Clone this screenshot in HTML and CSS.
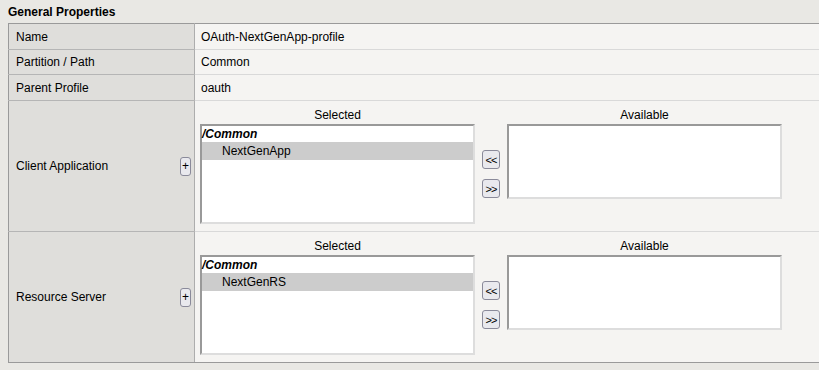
FILE: index.html
```html
<!DOCTYPE html>
<html lang="en">
<head>
    <meta charset="UTF-8">
    <title>OAuth Profile - General Properties</title>
    <link rel="stylesheet" href="styles.css">
</head>
<body>
<div class="section">
    <div class="section-title">General Properties</div>
    <table class="props">
        <tr>
            <td class="label">Name</td>
            <td class="value">OAuth-NextGenApp-profile</td>
        </tr>
        <tr class="short">
            <td class="label">Partition / Path</td>
            <td class="value">Common</td>
        </tr>
        <tr>
            <td class="label">Parent Profile</td>
            <td class="value">oauth</td>
        </tr>
        <tr class="tall">
            <td class="label">
                <div class="label-row">
                    <span>Client Application</span>
                    <button class="mini-btn plus">+</button>
                </div>
            </td>
            <td class="value list-cell">
                <div class="chooser">
                    <div class="col-title">Selected</div>
                    <div></div>
                    <div class="col-title">Available</div>
                    <div class="listbox big">
                        <div class="group">/Common</div>
                        <div class="option selected">NextGenApp</div>
                    </div>
                    <div class="move-btns">
                        <button class="mini-btn">&lt;&lt;</button>
                        <button class="mini-btn">&gt;&gt;</button>
                    </div>
                    <div class="listbox small"></div>
                </div>
            </td>
        </tr>
        <tr class="tall last">
            <td class="label">
                <div class="label-row">
                    <span>Resource Server</span>
                    <button class="mini-btn plus">+</button>
                </div>
            </td>
            <td class="value list-cell">
                <div class="chooser">
                    <div class="col-title">Selected</div>
                    <div></div>
                    <div class="col-title">Available</div>
                    <div class="listbox big">
                        <div class="group">/Common</div>
                        <div class="option selected">NextGenRS</div>
                    </div>
                    <div class="move-btns">
                        <button class="mini-btn">&lt;&lt;</button>
                        <button class="mini-btn">&gt;&gt;</button>
                    </div>
                    <div class="listbox small"></div>
                </div>
            </td>
        </tr>
    </table>
</div>
</body>
</html>
```

FILE: styles.css
```css
body {
    margin: 0;
    background-color: #e9e8e4;
    font-family: "Liberation Sans", Arial, sans-serif;
    font-size: 12px;
    color: #000;
    overflow: hidden;
}

.section {
    padding-left: 8px;
}

.section-title {
    font-weight: bold;
    height: 23px;
    line-height: 16px;
    padding-top: 4px;
    box-sizing: border-box;
}

/* Properties table */
.props {
    border-collapse: collapse;
    width: calc(100% + 20px);
    border-top: 1px solid #9a9a9a;
    border-left: 1px solid #9a9a9a;
}

.props td {
    height: 25px;
    padding: 0;
    border-bottom: 1px solid #d9d9d9;
    vertical-align: middle;
}

.props tr.short td {
    height: 24px;
}

.props tr.last td {
    border-bottom: 1px solid #9a9a9a;
}

.props td.label {
    width: 175px;
    padding-left: 7px;
    padding-right: 3px;
    background-color: #dfdedb;
    border-right: 1px solid #adadad;
    border-bottom-color: #b5b5b5;
}

.props td.value {
    padding-left: 6px;
    background-color: #f5f4f2;
}

.props tr.tall td {
    height: 130px;
}

.label-row {
    display: flex;
    align-items: center;
    justify-content: space-between;
}

/* small grey buttons */
.mini-btn {
    font-family: "Liberation Sans", Arial, sans-serif;
    font-size: 11px;
    background-color: #e9e9ee;
    border: 1px solid #8a8a9a;
    border-radius: 3px;
    padding: 0;
    width: 18px;
    height: 19px;
    color: #000;
    line-height: 16px;
    letter-spacing: -1px;
}

.mini-btn.plus {
    width: 11px;
    font-size: 12px;
    letter-spacing: 0;
}

/* Selected / Available chooser */
.props td.list-cell {
    padding-left: 5px;
    vertical-align: top;
}

.chooser {
    display: grid;
    grid-template-columns: 275px 18px 275px;
    column-gap: 7px;
    padding-top: 7px;
}

.col-title {
    text-align: center;
    line-height: 15px;
    margin-bottom: 1px;
}

.listbox {
    background-color: #fff;
    border-style: solid;
    border-width: 2px;
    border-color: #999 #ddd #ddd #999;
    box-sizing: border-box;
}

.listbox.big {
    height: 100px;
}

.listbox.small {
    height: 75px;
}

.group {
    font-weight: bold;
    font-style: italic;
    line-height: 16px;
}

.option {
    line-height: 18px;
    padding-left: 20px;
}

.option.selected {
    background-color: #cccccc;
}

.move-btns {
    align-self: center;
    display: flex;
    flex-direction: column;
    gap: 10px;
}
```
